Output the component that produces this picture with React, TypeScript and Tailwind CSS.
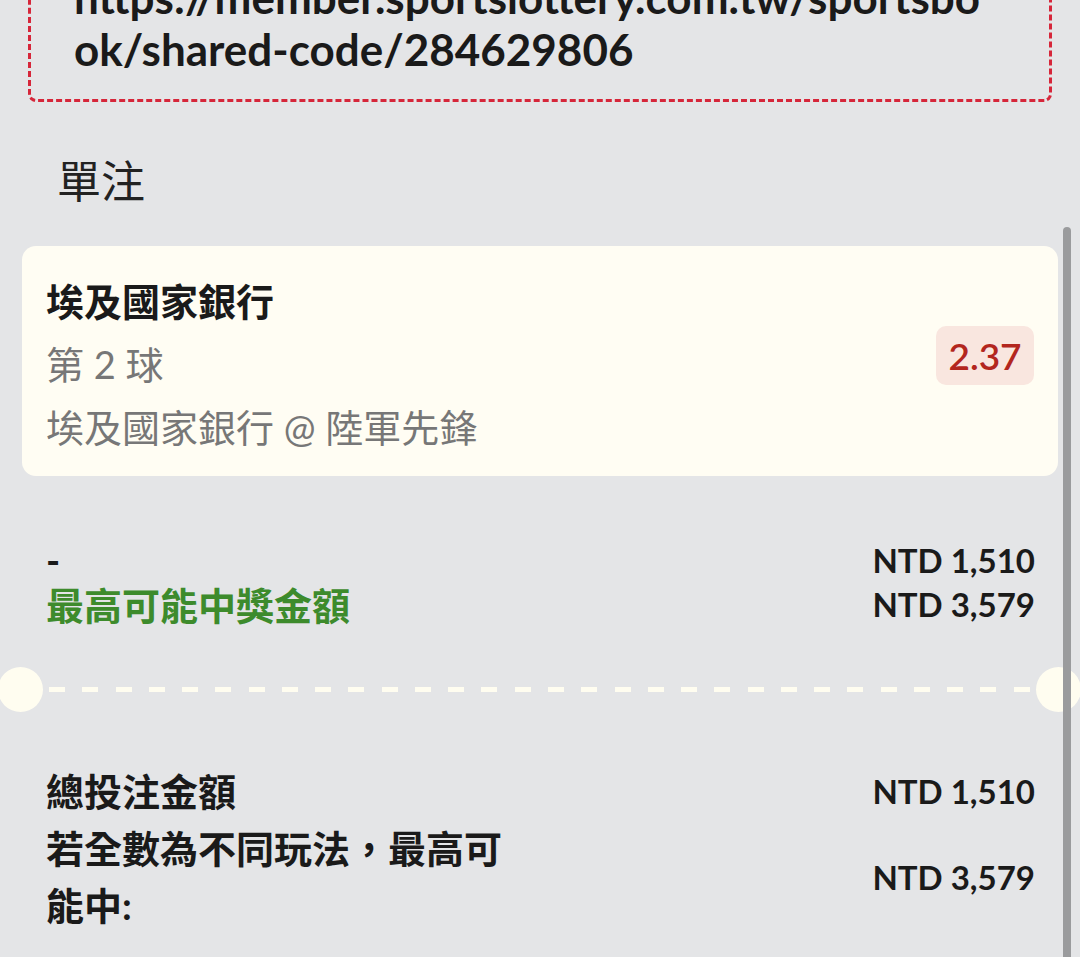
import React from "react";

const FONT = "font-['Lato','Noto_Sans_CJK_TC',sans-serif]";

function Divider() {
  const dashes = Array.from({ length: 30 });
  return (
    <div className="flex items-center mt-[39px] h-[45px]">
      <div className="w-[45px] h-[45px] rounded-full bg-[#fffdf0] ml-[-2px] shrink-0" />
      <div className="flex-1 flex justify-between mx-[6px]">
        {dashes.map((_, i) => (
          <span key={i} className="block w-[16px] h-[5px] bg-[#fffdf0]" />
        ))}
      </div>
      <div className="w-[45px] h-[45px] rounded-full bg-[#fffdf0] mr-[-1px] shrink-0" />
    </div>
  );
}

export default function App() {
  return (
    <div className={`relative h-[957px] overflow-hidden bg-[#e4e5e7] text-[#1a1a1a] ${FONT}`}>
      {/* shared link box */}
      <div className="mt-[-56px] mx-[28px] border-[3px] border-dashed border-[#d6263a] rounded-lg px-[43px] py-[24px]">
        <p className="text-[44px] leading-[52px] font-bold break-all">
          https://member.sportslottery.com.tw/sportsbo
          <br />
          ok/shared-code/284629806
        </p>
      </div>

      <h2 className="mt-[51px] pl-[57px] text-[44px] leading-[56px] font-normal text-[#222]">單注</h2>

      {/* bet card */}
      <div className="mt-[37px] mx-[22px] rounded-[14px] bg-[#fffdf3] px-6 pt-[24px] pb-[17px] flex items-center justify-between">
        <div className="text-[38px] leading-[63px]">
          <div className="font-bold text-[#1a1a1a]">埃及國家銀行</div>
          <div className="text-[#777]">第 2 球</div>
          <div className="text-[#777]">埃及國家銀行 @ 陸軍先鋒</div>
        </div>
        <div className="mb-[18px] rounded-[10px] bg-[#f9e6df] px-[12px] h-[59px] w-[98px] flex items-center justify-center text-[37px] font-semibold text-[#b3261e]">
          2.37
        </div>
      </div>

      {/* single stake */}
      <div className="mt-[62px] pl-[46px] pr-[45px] flex justify-between">
        <div className="text-[38px] leading-[45px] font-bold">
          <div>-</div>
          <div className="text-[#3d8b2c]">最高可能中獎金額</div>
        </div>
        <div className="text-right text-[33px] leading-[44px] font-bold">
          <div>NTD 1,510</div>
          <div>NTD 3,579</div>
        </div>
      </div>

      <Divider />

      {/* totals */}
      <div className="mt-[51px] pl-[46px] pr-[45px] text-[38px] leading-[57px] font-bold">
        <div className="flex justify-between items-center">
          <span>總投注金額</span>
          <span className="text-[33px]">NTD 1,510</span>
        </div>
        <div className="flex justify-between items-center">
          <span className="max-w-[475px]">若全數為不同玩法，最高可能中:</span>
          <span className="text-[33px]">NTD 3,579</span>
        </div>
      </div>

      {/* scrollbar */}
      <div className="absolute right-[9px] top-[227px] bottom-0 w-[8px] rounded-t-full bg-[#9a9b9d]" />
    </div>
  );
}
